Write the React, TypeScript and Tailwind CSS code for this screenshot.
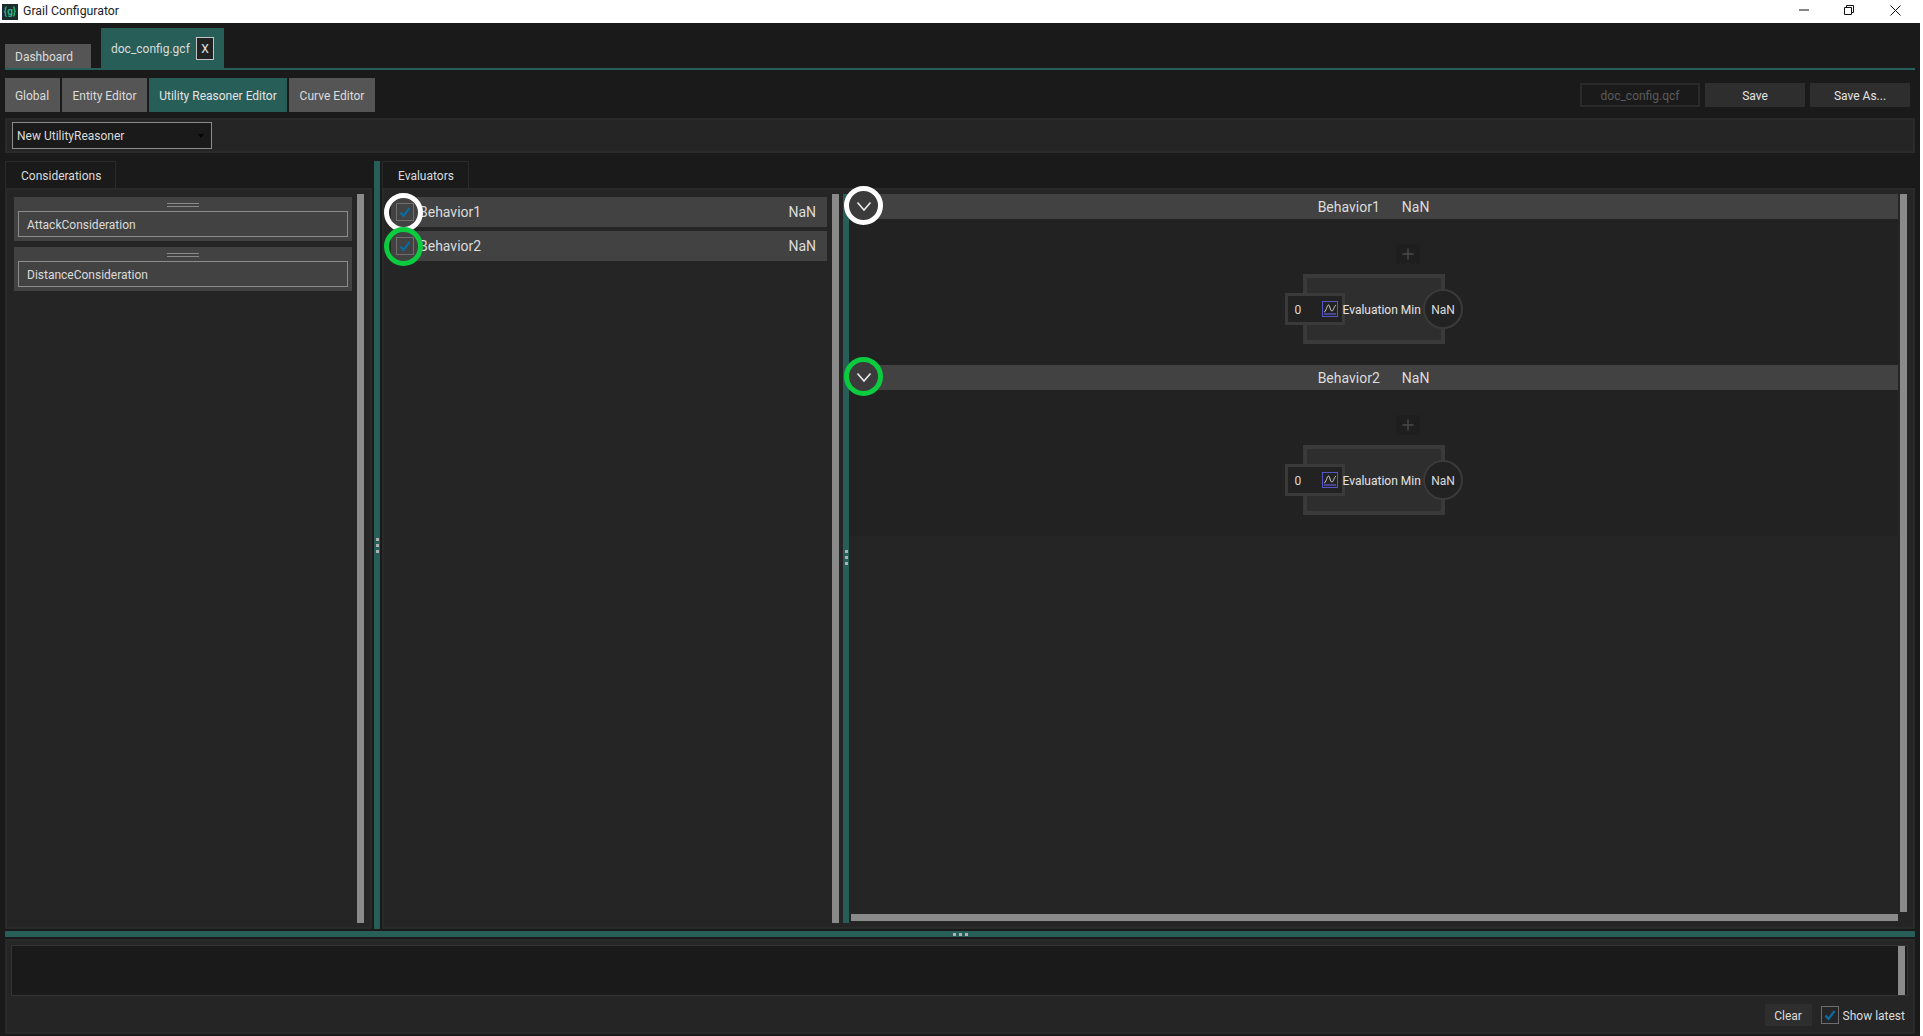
import React from "react";

const font = { fontFamily: 'Roboto, "Open Sans", sans-serif' };

function Check({ className = "" }: { className?: string }) {
  return (
    <span className={"flex h-[18px] w-[18px] shrink-0 items-center justify-center border border-[#6e6e6e] " + className}>
      <svg width="14" height="14" viewBox="0 0 14 14" fill="none">
        <path d="M2.5 7.5 L5.5 11 L11.5 3" stroke="#0a6ba3" strokeWidth="2.2" />
      </svg>
    </span>
  );
}

function Chevron() {
  return (
    <svg width="18" height="18" viewBox="0 0 18 18" fill="none">
      <path d="M2.5 5.5 L9 13 L15.5 5.5" stroke="#ececec" strokeWidth="1.6" />
    </svg>
  );
}

function Card({ name, first }: { name: string; first?: boolean }) {
  return (
    <div className={"flex h-[44px] w-[338px] flex-col items-center bg-[#424242] pt-[6px] " + (first ? "" : "mt-[6px]")}>
      <div className="h-[4px] w-[32px] border-y border-[#8a8a8a]" />
      <div className="mt-[4px] flex h-[26px] w-[330px] items-center border border-[#8c8c8c] pl-[8px] pt-[2px] text-[12px] text-[#dcdcdc]">
        {name}
      </div>
    </div>
  );
}

function Row({ name, ring, first }: { name: string; ring: string; first?: boolean }) {
  return (
    <div className={"relative ml-[7px] flex h-[30px] w-[436px] items-center bg-[#424242] pl-[5px] pr-[11px] " + (first ? "" : "mt-[4px]")}>
      <Check />
      <span className="ml-[5px] flex-1 text-[14px] text-[#dcdcdc]">{name}</span>
      <span className="text-[14px] text-[#dcdcdc]">NaN</span>
      <span className={"absolute left-[-7px] top-[-4px] h-[39px] w-[39px] rounded-full border-[5px] " + ring} />
    </div>
  );
}

function Section({ name, ring }: { name: string; ring: string }) {
  return (
    <div className="flex h-[171px] flex-col items-center bg-[#222222]">
      <div className="relative flex h-[25px] w-full items-center justify-center gap-[22px] bg-[#424242] pt-[2px] text-[14px] text-[#dcdcdc]">
        <span>{name}</span>
        <span>NaN</span>
        <span className={"absolute left-[-5px] top-[-8px] flex h-[39px] w-[39px] items-center justify-center rounded-full border-[5px] bg-[#3b3b3b] " + ring}>
          <Chevron />
        </span>
      </div>
      <div className="mt-[25px] flex h-[20px] w-[142px] justify-end pr-[25px]">
        <span className="flex h-[20px] w-[24px] items-center justify-center bg-[#1f1f1f] text-[#4c4c4c]">
          <svg width="12" height="12" viewBox="0 0 12 12" fill="none">
            <path d="M6 0.5 V11.5 M0.5 6 H11.5" stroke="#4a4a4a" strokeWidth="1.4" />
          </svg>
        </span>
      </div>
      <div className="mt-[10px] flex h-[70px] w-[142px] items-center border-[4px] border-[#3a3a3a] bg-[#2e2e2e]">
        <div className="-mx-[22px] flex w-[178px] shrink-0 items-center">
          <div className="flex h-[32px] w-[60px] items-center border-[3px] border-[#3a3a3a] bg-[#222222] pl-[7px] text-[12px] text-[#dcdcdc]">
            <span className="flex-1 pt-[2px]">0</span>
            <span className="mr-[4px] flex h-[16px] w-[16px] items-center justify-center border border-[#5656c4]">
              <svg width="14" height="14" viewBox="0 0 14 14" fill="none">
                <path d="M1 10 C3 10 4 3 5.5 3 C7 3 7 9 9 9 C10.5 9 11 4 13 3" stroke="#d0d0d0" strokeWidth="1" />
                <path d="M1 12 H13" stroke="#5656c4" strokeWidth="1.4" />
              </svg>
            </span>
          </div>
          <span className="ml-[-2px] flex-1 whitespace-nowrap pt-[2px] text-[12px] text-[#e4e4e4]">Evaluation Min</span>
          <span className="flex h-[40px] w-[40px] shrink-0 items-center justify-center rounded-full border-2 border-[#3a3a3a] bg-[#222222] pl-[1px] pt-[2px] text-[12px] text-[#dcdcdc]">
            NaN
          </span>
        </div>
      </div>
    </div>
  );
}

function Dots({ vertical }: { vertical?: boolean }) {
  return (
    <span className={"flex gap-[3px] " + (vertical ? "flex-col" : "flex-row")}>
      <span className="h-[3px] w-[3px] bg-[#b0b0b0]" />
      <span className="h-[3px] w-[3px] bg-[#b0b0b0]" />
      <span className="h-[3px] w-[3px] bg-[#b0b0b0]" />
    </span>
  );
}

export default function App() {
  return (
    <div style={font} className="flex h-[1036px] w-[1923px] flex-col overflow-hidden bg-white text-[12px]">
      {/* Title bar */}
      <div className="flex h-[23px] w-[1920px] shrink-0 items-center pl-[2px] text-[12px] text-[#222222]">
        <span className="flex h-[16px] w-[16px] items-center justify-center bg-[#1c2b2b] text-[10px] font-bold leading-none text-[#2bb58f]">{"{g}"}</span>
        <span className="ml-[5px] flex-1 text-[12.3px]">Grail Configurator</span>
        <svg className="mb-[3px] mr-[35px]" width="10" height="10" viewBox="0 0 10 10" fill="none">
          <path d="M0 5 H10" stroke="#111" strokeWidth="1" />
        </svg>
        <svg className="mb-[3px] mr-[36px]" width="10" height="10" viewBox="0 0 10 10" fill="none">
          <path d="M0.5 2.5 H7.5 V9.5 H0.5 Z M2.5 2.5 V0.5 H9.5 V7.5 H7.5" stroke="#111" strokeWidth="1" />
        </svg>
        <svg className="mb-[3px] mr-[19px]" width="11" height="11" viewBox="0 0 11 11" fill="none">
          <path d="M0.5 0.5 L10.5 10.5 M10.5 0.5 L0.5 10.5" stroke="#111" strokeWidth="1" />
        </svg>
      </div>

      <div className="flex h-[1013px] w-[1920px] flex-col bg-[#1a1a1a] px-[5px]">
        {/* Document tabs */}
        <div className="flex h-[47px] shrink-0 items-end gap-[10px] border-b-2 border-[#285e58]">
          <div className="flex h-[24px] w-[86px] items-center bg-[#555555] pl-[10px] pt-[2px] text-[#dcdcdc]">Dashboard</div>
          <div className="-mb-[1px] flex h-[41px] w-[123px] items-center bg-[#285e58] pl-[10px] text-[#dcdcdc]">
            <span className="flex-1">doc_config.gcf</span>
            <span className="mr-[10px] flex h-[23px] w-[18px] items-center justify-center border border-[#c4c4c4] bg-[#222222] text-[#e4e4e4]">X</span>
          </div>
        </div>

        {/* Editor tabs */}
        <div className="mt-[8px] flex h-[34px] shrink-0 items-stretch gap-[2px]">
          <div className="flex w-[55px] items-center justify-center bg-[#555555] pr-[1px] pt-[2px] text-[#dcdcdc]">Global</div>
          <div className="flex w-[85px] items-center justify-center bg-[#555555] pt-[2px] text-[#dcdcdc]">Entity Editor</div>
          <div className="flex w-[138px] items-center justify-center bg-[#285e58] pt-[2px] text-[#e4e4e4]">Utility Reasoner Editor</div>
          <div className="flex w-[86px] items-center justify-center bg-[#555555] pt-[2px] text-[#dcdcdc]">Curve Editor</div>
          <div className="flex flex-1 items-start justify-end gap-[5px] pr-[5px] pt-[5px]">
            <div className="flex h-[24px] w-[120px] items-center justify-center border-2 border-[#2a2a2a] bg-[#1a1a1a] pt-[2px] text-[#5c5c5c]">doc_config.qcf</div>
            <div className="flex h-[24px] w-[100px] items-center justify-center bg-[#2e2e2e] pt-[2px] text-[#e4e4e4]">Save</div>
            <div className="flex h-[24px] w-[100px] items-center justify-center bg-[#2e2e2e] pt-[2px] text-[#e4e4e4]">Save As...</div>
          </div>
        </div>

        {/* Reasoner combo */}
        <div className="mt-[6px] flex h-[35px] shrink-0 items-center border-2 border-[#2a2a2a] bg-[#252525] pl-[5px]">
          <div className="flex h-[27px] w-[200px] items-center border border-[#8c8c8c] bg-[#1a1a1a] pl-[4px] pr-[7px] text-[#dcdcdc]">
            <span className="flex-1">New UtilityReasoner</span>
            <span className="h-0 w-0 border-x-[3.5px] border-t-[4px] border-x-transparent border-t-[#050505]" />
          </div>
        </div>

        {/* Main */}
        <div className="mt-[8px] flex h-[768px] shrink-0 gap-[2px]">
          <div className="flex w-[367px] shrink-0 flex-col">
            <div className="flex h-[27px] w-[111px] items-center border-x border-t border-[#2a2a2a] pl-[15px] pt-[2px] text-[#dcdcdc]">Considerations</div>
            <div className="flex flex-1 border-2 border-[#2a2a2a] bg-[#252525] pb-[4px] pl-[7px] pt-[4px]">
              <div className="flex w-[338px] flex-col pt-[3px]">
                <Card name="AttackConsideration" first />
                <Card name="DistanceConsideration" />
              </div>
              <div className="ml-[5px] w-[7px] bg-[#8a8a8a]" />
            </div>
          </div>

          <div className="flex w-[6px] shrink-0 items-center justify-center bg-[#285e58]">
            <Dots vertical />
          </div>

          <div className="flex flex-1 flex-col">
            <div className="flex h-[27px] w-[87px] items-center border-x border-t border-[#2a2a2a] pl-[15px] pt-[2px] text-[#dcdcdc]">Evaluators</div>
            <div className="flex flex-1 border-2 border-[#2a2a2a] bg-[#252525] pb-[4px] pt-[4px]">
              <div className="flex w-[448px] flex-col pt-[3px]">
                <Row name="Behavior1" ring="border-white" first />
                <Row name="Behavior2" ring="border-[#0bcb3f]" />
              </div>
              <div className="w-[7px] bg-[#8a8a8a]" />
              <div className="ml-[4px] flex w-[6px] items-center justify-center bg-[#285e58]">
                <span className="mt-[-2px]"><Dots vertical /></span>
              </div>
              <div className="flex flex-1 flex-col">
                <div className="flex flex-1">
                  <div className="flex w-[1049px] flex-col">
                    <Section name="Behavior1" ring="border-white" />
                    <Section name="Behavior2" ring="border-[#0bcb3f]" />
                  </div>
                  <div className="mb-[2px] ml-[2px] w-[7px] bg-[#8a8a8a]" />
                </div>
                <div className="mb-[2px] ml-[2px] h-[7px] w-[1047px] bg-[#8a8a8a]" />
              </div>
            </div>
          </div>
        </div>

        {/* Horizontal splitter */}
        <div className="mt-[2px] flex h-[6px] shrink-0 items-center justify-center bg-[#285e58]">
          <Dots />
        </div>

        {/* Log */}
        <div className="mt-[2px] flex h-[95px] shrink-0 flex-col border-2 border-[#2a2a2a] bg-[#252525] pl-[4px] pr-[5px] pt-[4px]">
          <div className="flex h-[51px] shrink-0 justify-end border border-[#333333] bg-[#1a1a1a] pr-[2px]">
            <div className="w-[7px] bg-[#8a8a8a]" />
          </div>
          <div className="mt-[8px] flex h-[22px] items-center justify-end text-[#dcdcdc]">
            <div className="flex h-[22px] w-[47px] items-center justify-center bg-[#2e2e2e] pt-[2px]">Clear</div>
            <Check className="ml-[9px]" />
            <span className="ml-[4px] mr-[3px] pt-[2px]">Show latest</span>
          </div>
        </div>
      </div>
    </div>
  );
}
